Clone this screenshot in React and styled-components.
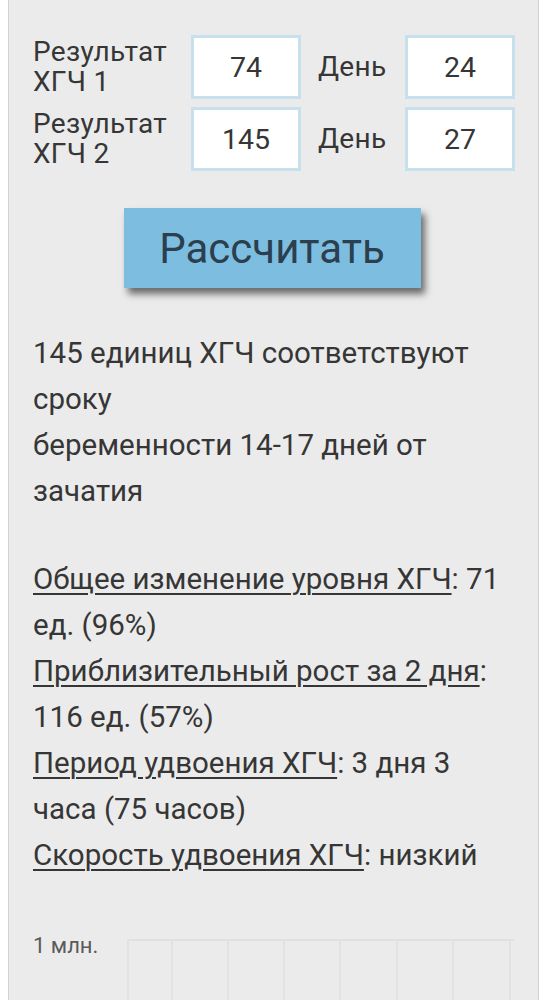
import React from "react";
import styled, { createGlobalStyle } from "styled-components";

const GlobalStyle = createGlobalStyle`
  html, body {
    margin: 0;
    padding: 0;
    background: #ffffff;
  }
  body {
    font-family: Roboto, "Noto Sans", "Liberation Sans", sans-serif;
    color: #363636;
  }
`;

const Panel = styled.div`
  margin: 0 8px;
  min-height: 1000px;
  box-sizing: border-box;
  background: #ebebeb;
  border-left: 1px solid #d2d2d2;
  border-right: 1px solid #d2d2d2;
  padding: 35px 24px 0 24px;
`;

const Form = styled.div`
  display: grid;
  grid-template-columns: 158px 110px 104px 110px;
  grid-auto-rows: 64px;
  row-gap: 8px;
`;

const Label = styled.div`
  font-size: 28px;
  letter-spacing: 0.3px;
  line-height: 30px;
  align-self: center;
  padding-left: ${(p) => p.$indent || 0}px;
`;

const Field = styled.div`
  box-sizing: border-box;
  background: #ffffff;
  border: 3px solid #c6e0ee;
  display: flex;
  align-items: center;
  justify-content: center;
  font-size: 28.5px;
`;

const ButtonRow = styled.div`
  display: flex;
  justify-content: center;
  margin-top: 37px;
  padding-right: 3px;
`;

const CalcButton = styled.button`
  width: 297px;
  height: 80px;
  border: none;
  background: #7dbde0;
  color: #2b3f4e;
  font-family: Roboto, "Noto Sans", sans-serif;
  font-size: 42px;
  box-shadow: 4px 6px 7px rgba(0, 0, 0, 0.55);
  cursor: pointer;
`;

const Result = styled.p`
  margin: 42px 0 0;
  font-size: 29.5px;
  line-height: 46px;
`;

const Stats = styled.div`
  margin-top: 42px;
  font-size: 29.5px;
  line-height: 46px;
`;

const Term = styled.span`
  text-decoration: underline;
  text-decoration-thickness: 1.5px;
  text-underline-offset: 4px;
`;

const ChartArea = styled.div`
  display: flex;
  margin-top: 55px;
`;

const AxisLabel = styled.div`
  font-size: 22px;
  line-height: 26px;
  color: #5a5a5a;
  width: 94px;
  flex-shrink: 0;
`;

const Grid = styled.svg`
  display: block;
  flex: 1;
  margin-top: 6px;
  height: 80px;
`;

const stats = [
  { term: "Общее изменение уровня ХГЧ", value: "71 ед. (96%)" },
  { term: "Приблизительный рост за 2 дня", value: "116 ед. (57%)" },
  { term: "Период удвоения ХГЧ", value: "3 дня 3 часа (75 часов)" },
  { term: "Скорость удвоения ХГЧ", value: "низкий" },
];

const gridLines = [0, 44, 100, 156, 212, 269, 325, 382];

export default function App() {
  return (
    <>
      <GlobalStyle />
      <Panel>
        <Form>
          <Label>
            Результат
            <br />
            ХГЧ 1
          </Label>
          <Field>74</Field>
          <Label $indent={17}>День</Label>
          <Field>24</Field>
          <Label>
            Результат
            <br />
            ХГЧ 2
          </Label>
          <Field>145</Field>
          <Label $indent={17}>День</Label>
          <Field>27</Field>
        </Form>

        <ButtonRow>
          <CalcButton>Рассчитать</CalcButton>
        </ButtonRow>

        <Result>
          145 единиц ХГЧ соответствуют сроку
          <br />
          беременности 14-17 дней от зачатия
        </Result>

        <Stats>
          {stats.map((s) => (
            <div key={s.term}>
              <Term>{s.term}</Term>: {s.value}
            </div>
          ))}
        </Stats>

        <ChartArea>
          <AxisLabel>1 млн.</AxisLabel>
          <Grid>
            <line x1="0" y1="1" x2="420" y2="1" stroke="#e0e0e0" strokeWidth="2" />
            {gridLines.map((x) => (
              <line key={x} x1={x + 1} y1="0" x2={x + 1} y2="80" stroke="#e2e2e2" strokeWidth="2" />
            ))}
          </Grid>
        </ChartArea>
      </Panel>
    </>
  );
}
